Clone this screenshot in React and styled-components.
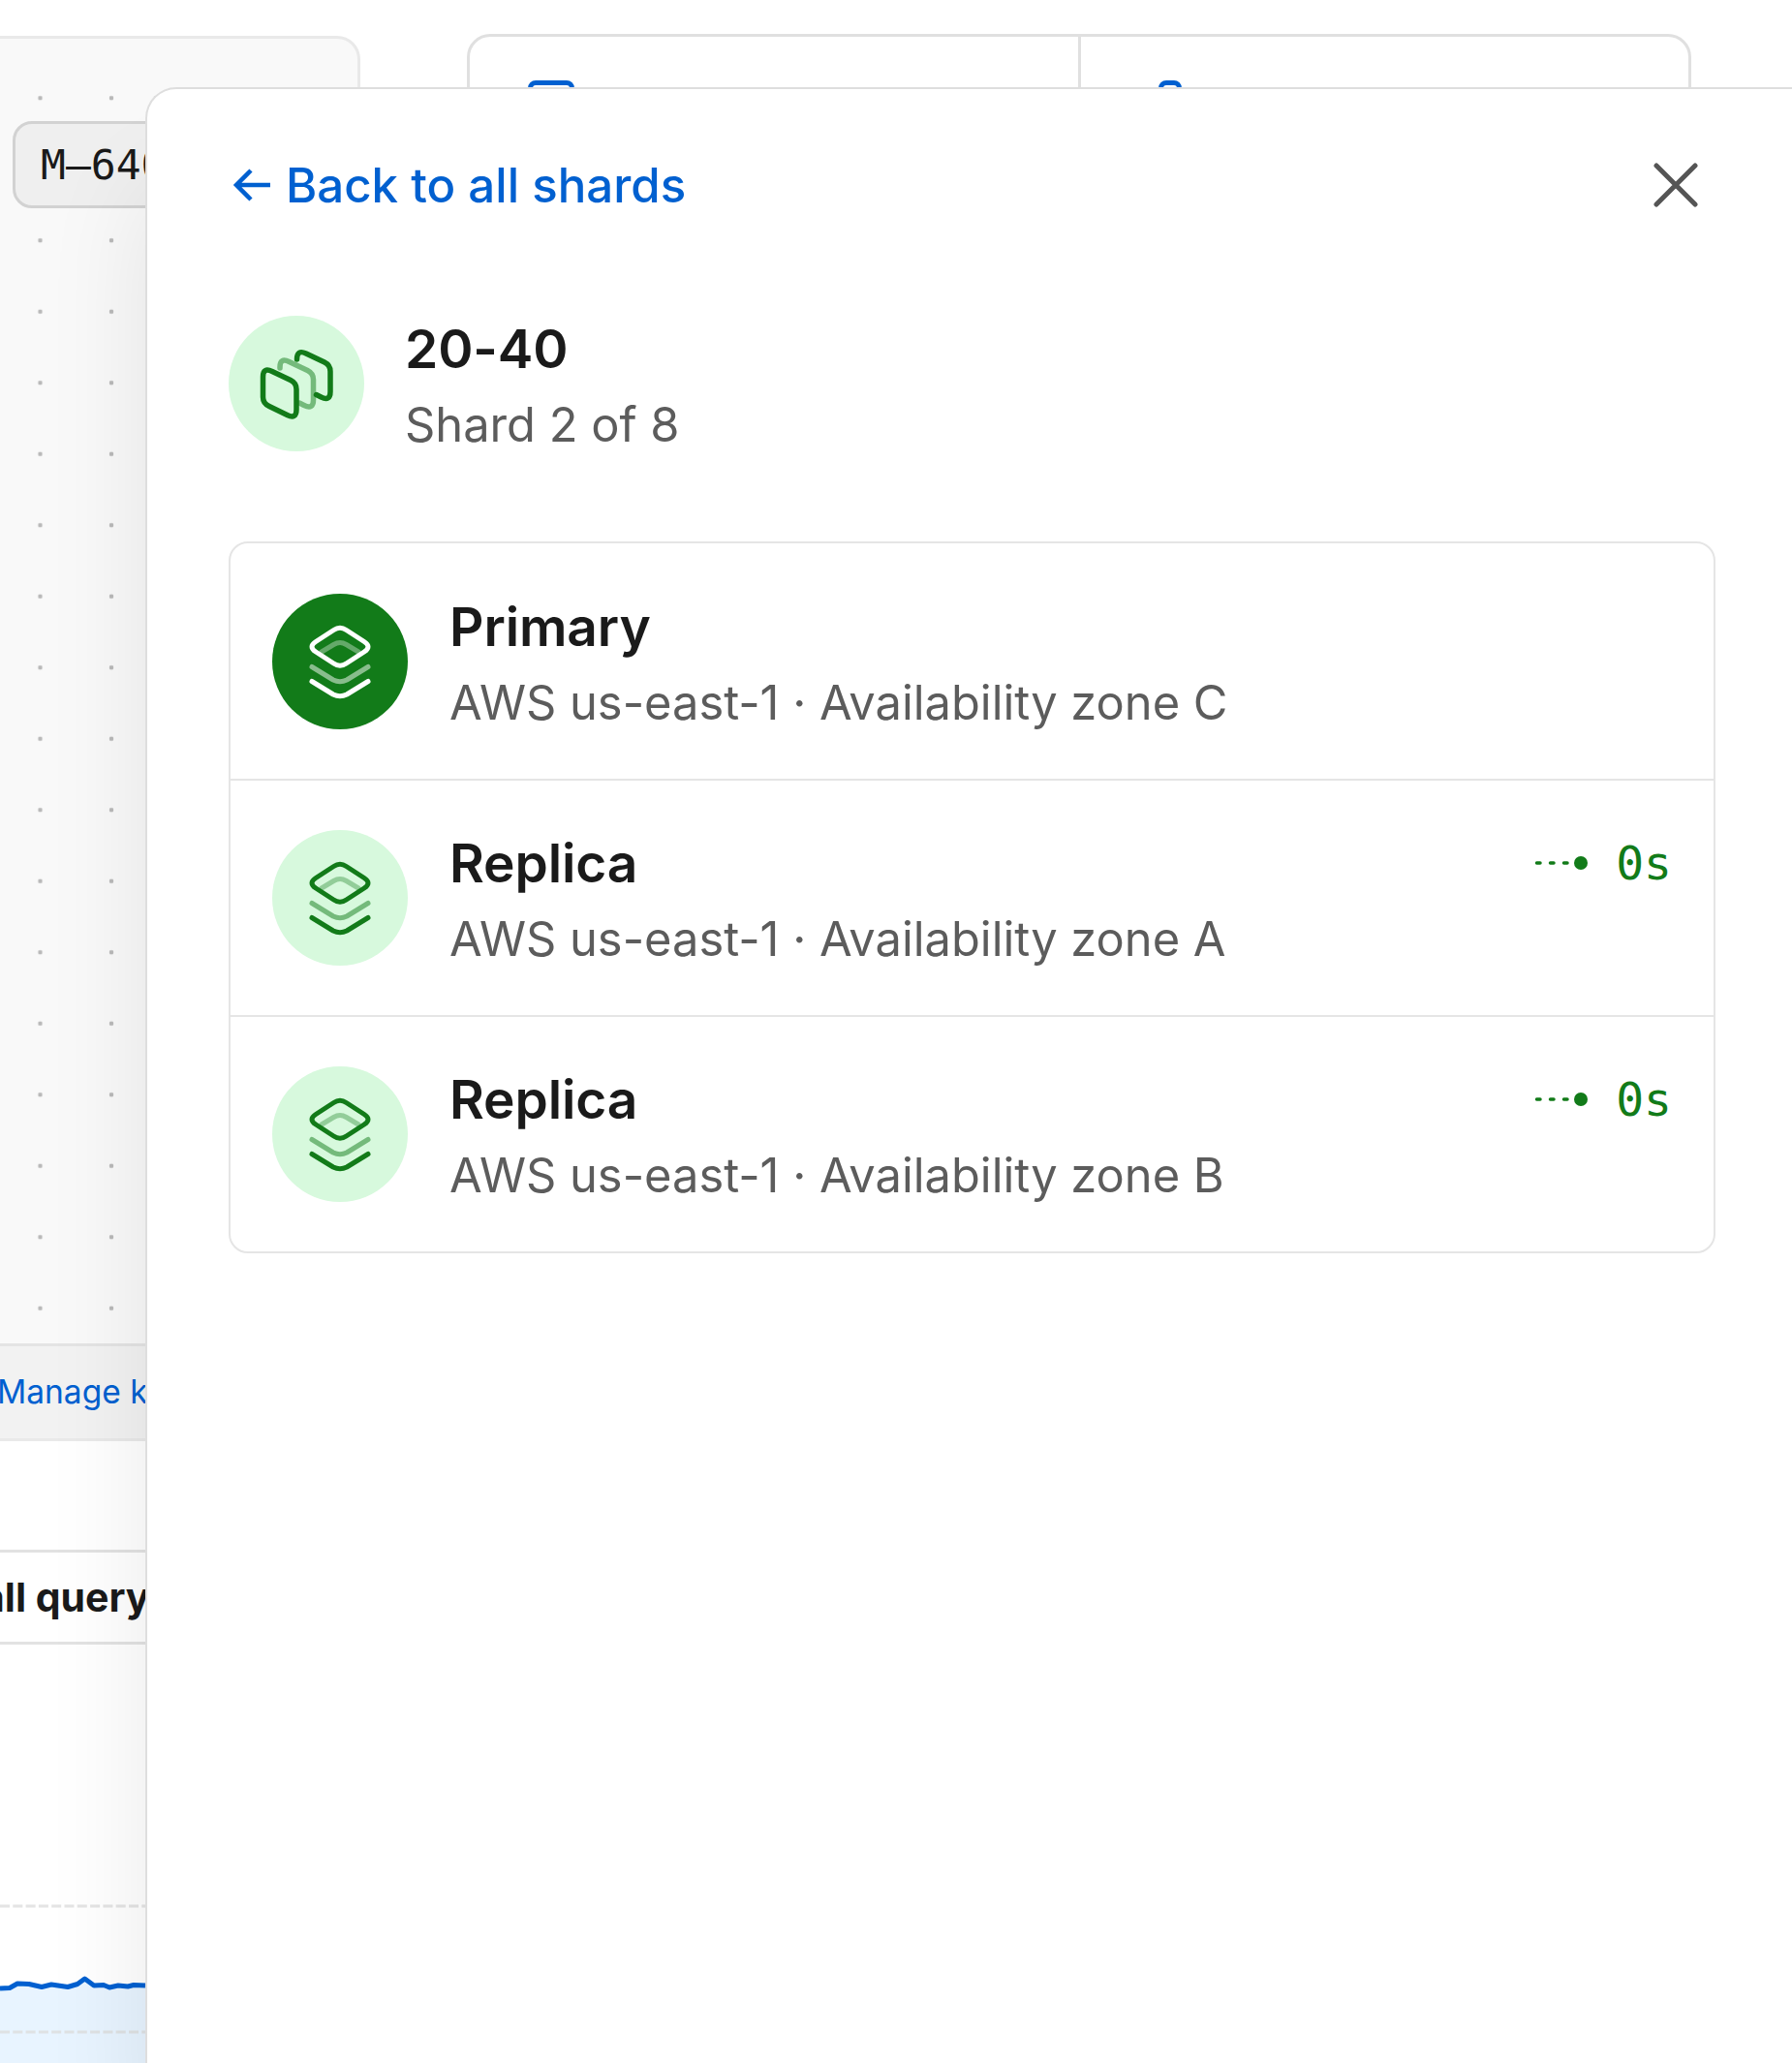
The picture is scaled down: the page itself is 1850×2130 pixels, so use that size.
import styled, { createGlobalStyle } from "styled-components";

const GREEN = "#127b19";
const BLUE = "#0060d0";

const GlobalStyle = createGlobalStyle`
  html, body {
    margin: 0;
    padding: 0;
    background: #fff;
    font-family: Inter, "Noto Sans", sans-serif;
    color: #1a1a1a;
  }
`;

const Page = styled.div`
  position: relative;
  width: 1850px;
  height: 2130px;
  overflow: hidden;
  display: flex;
  align-items: flex-start;
`;

const LeftColumn = styled.div`
  width: 372px;
  flex: none;
  padding-top: 37px;
`;

const MapCard = styled.div`
  background-color: #f9f9f9;
  background-image: radial-gradient(circle, #b9b9b9 2px, transparent 2.6px);
  background-size: 73.5px 73.5px;
  background-position: 4.75px 24.5px;
  border-top: 3px solid #e9e9e9;
  border-right: 3px solid #e9e9e9;
  border-top-right-radius: 24px;
  height: 1350px;
  padding: 85px 0 0 13px;
  box-sizing: border-box;
`;

const SizeButton = styled.div`
  display: inline-flex;
  align-items: center;
  height: 90px;
  box-sizing: border-box;
  padding: 0 30px 0 26px;
  background: #efefef;
  border: 3px solid #d2d2d2;
  border-radius: 20px;
  font-family: "DejaVu Sans Mono", monospace;
  font-size: 43px;
  color: #1a1a1a;
`;

const ManageStrip = styled.div`
  height: 101px;
  box-sizing: border-box;
  display: flex;
  align-items: center;
  background: #f2f2f2;
  border-top: 3px solid #e4e4e4;
  border-bottom: 3px solid #e9e9e9;
  color: ${BLUE};
  font-size: 33.5px;
  line-height: 40px;
  padding-bottom: 2px;
  white-space: nowrap;
  overflow: hidden;
`;

const ManageLink = styled.span`
  margin-left: -3px;
`;

const QueryTab = styled.div`
  margin-top: 112px;
  height: 98px;
  box-sizing: border-box;
  display: flex;
  align-items: center;
  border-top: 3px solid #e2e2e2;
  border-bottom: 3px solid #e2e2e2;
  font-size: 41px;
  font-weight: 700;
  white-space: nowrap;
  overflow: hidden;
`;

const QueryLabel = styled.span`
  margin-left: -115px;
`;

const ChartSvg = styled.svg`
  display: block;
`;

const ClusterCard = styled.div`
  margin: 35px 0 0 110px;
  width: 1264px;
  height: 260px;
  flex: none;
  box-sizing: border-box;
  display: flex;
  border: 3px solid #e0e0e0;
  border-radius: 24px;
`;

const ClusterCell = styled.div`
  box-sizing: border-box;
  width: ${(p) => p.$width}px;
  padding: 45px 0 0 ${(p) => p.$inset}px;
  & + & {
    border-left: 3px solid #e0e0e0;
  }
`;

const CellIcon = styled.div`
  width: ${(p) => p.$width}px;
  height: 60px;
  box-sizing: border-box;
  border: 5px solid ${BLUE};
  border-radius: 8px;
`;

const Panel = styled.aside`
  position: absolute;
  top: 90px;
  left: 150px;
  right: 0;
  bottom: 0;
  box-sizing: border-box;
  padding: 69px 79px 0 84px;
  background: #fff;
  border-top: 2px solid #dedede;
  border-left: 2px solid #dedede;
  border-top-left-radius: 32px;
  box-shadow: 0 100px 110px rgba(0, 0, 0, 0.09);
`;

const TopBar = styled.div`
  display: flex;
  justify-content: space-between;
  align-items: center;
  height: 60px;
  padding-right: 18px;
`;

const BackLink = styled.a`
  display: flex;
  align-items: center;
  gap: 15px;
  color: ${BLUE};
  font-size: 49.2px;
  font-weight: 500;
  line-height: 58px;
  padding-left: 4px;
`;

const ShardHead = styled.div`
  display: flex;
  align-items: flex-start;
  gap: 42px;
  margin-top: 105px;
`;

const Badge = styled.div`
  flex: none;
  width: 140px;
  height: 140px;
  border-radius: 50%;
  background: ${(p) => (p.$solid ? GREEN : "#d7f9dd")};
  color: ${(p) => (p.$solid ? "#fff" : GREEN)};
  svg {
    display: block;
  }
`;

const TextStack = styled.div`
  display: flex;
  flex-direction: column;
  gap: 15px;
  height: 140px;
`;

const Title = styled.div`
  font-size: 55px;
  line-height: 68px;
  font-weight: 600;
  letter-spacing: -0.1px;
  color: #1a1a1a;
`;

const Subtitle = styled.div`
  font-size: 48.8px;
  line-height: 60px;
  color: #5c5c5c;
`;

const NodeList = styled.div`
  margin-top: 93px;
  border: 2px solid #e5e5e5;
  border-radius: 20px;
`;

const NodeRow = styled.div`
  display: flex;
  align-items: center;
  gap: 43px;
  height: 243px;
  box-sizing: border-box;
  padding: 0 43px 0 43px;
  & + & {
    height: 244px;
    border-top: 2px solid #e5e5e5;
  }
`;

const NodeBody = styled.div`
  flex: 1;
  display: flex;
  justify-content: space-between;
  align-items: flex-start;
`;

const Lag = styled.div`
  display: flex;
  align-items: center;
  gap: 27px;
  height: 68px;
  color: ${GREEN};
  font-family: "DejaVu Sans Mono", monospace;
  font-size: 48px;
`;

const LagDots = () => (
  <svg width="58" height="16" viewBox="0 0 58 16">
    <path d="M3.500 8h3.500M17.500 8h3.500M31.500 8h3.500" stroke={GREEN} strokeWidth="3.500" strokeLinecap="round" fill="none" />
    <circle cx="49" cy="8" r="7" fill={GREEN} />
  </svg>
);

const BackArrow = () => (
  <svg width="40" height="34" viewBox="0 0 40 34" fill="none" stroke="currentColor" strokeWidth="4.500">
    <path d="M39 17H4M19 2 4 17l15 15" />
  </svg>
);

const CloseIcon = () => (
  <svg width="46" height="46" viewBox="0 0 46 46" fill="none" stroke="#555" strokeWidth="5" strokeLinecap="round">
    <path d="M3 3l40 40M43 3 3 43" />
  </svg>
);

const ShardsIcon = () => (
  <svg width="140" height="140" viewBox="0 0 140 140" fill="none" stroke="currentColor" strokeWidth="5.500" strokeLinejoin="round" strokeLinecap="round">
    <path opacity="0.5" d="M53 54v-1q0-10 9.500-5.500l19 9q6 3 6 9.500v21q0 10-9.500 5.500l-5-2.500" />
    <path d="M70.500 45q0-10.500 9.500-6l19 9q6 3 6 9.500v21q0 10-9.500 5.500l-5-2.500" />
    <path d="M35.500 63q0-10 9.500-5.500l19 9q6 3 6 9.500v21q0 10-9.500 5.500l-18.500-9q-6.500-3-6.500-9.500z" />
  </svg>
);

const LayersIcon = () => (
  <svg width="140" height="140" viewBox="0 0 140 140" fill="none" stroke="currentColor" strokeWidth="5" strokeLinejoin="round" strokeLinecap="round">
    <path opacity="0.35" d="M51 60 63.500 52.500Q70 48.500 76.500 52.500L89 60" />
    <path d="M63.500 37.500Q70 33 76.500 37.500L95 49.500Q103 54.700 95 60L76.500 72Q70 76.500 63.500 72L45 60Q37 54.700 45 49.500Z" />
    <path opacity="0.5" d="M41 75.500 63 89Q70 92.500 77 89L99 75.500" />
    <path d="M41 90.500 63 104Q70 107.500 77 104L99 90.500" />
  </svg>
);

const nodes = [
  { id: 1, title: "Primary", zone: "C", solid: true },
  { id: 2, title: "Replica", zone: "A", lag: "0s" },
  { id: 3, title: "Replica", zone: "B", lag: "0s" },
];

const linePoints = "0,356 10,355.500 18,351 30,351.500 43,354.500 53,352 70,354.500 80,351.500 87.500,346 97,353 107,352.500 113,355 122,353 132,354 138,352.500 150,353";

export default function App() {
  return (
    <Page>
      <GlobalStyle />
      <LeftColumn>
        <MapCard>
          <SizeButton>M–640</SizeButton>
        </MapCard>
        <ManageStrip>
          <ManageLink>Manage keys</ManageLink>
        </ManageStrip>
        <QueryTab>
          <QueryLabel>Overall query</QueryLabel>
        </QueryTab>
        <ChartSvg width="372" height="433" viewBox="0 1 372 433">
          <polygon points={`${linePoints} 150,434 0,434`} fill="#e8f4ff" />
          <path d="M0 271H150M0 401H150" stroke="#dedede" strokeWidth="3" strokeDasharray="10 3.300" opacity="0.8" />
          <polyline points={linePoints} fill="none" stroke={BLUE} strokeWidth="5" strokeLinejoin="round" />
        </ChartSvg>
      </LeftColumn>

      <ClusterCard>
        <ClusterCell $width={628} $inset={60}>
          <CellIcon $width={48} />
        </ClusterCell>
        <ClusterCell $width={630} $inset={80}>
          <CellIcon $width={24} />
        </ClusterCell>
      </ClusterCard>

      <Panel>
        <TopBar>
          <BackLink>
            <BackArrow />
            Back to all shards
          </BackLink>
          <CloseIcon />
        </TopBar>

        <ShardHead>
          <Badge>
            <ShardsIcon />
          </Badge>
          <TextStack>
            <Title>20-40</Title>
            <Subtitle>Shard 2 of 8</Subtitle>
          </TextStack>
        </ShardHead>

        <NodeList>
          {nodes.map((node) => (
            <NodeRow key={node.id}>
              <Badge $solid={node.solid}>
                <LayersIcon />
              </Badge>
              <NodeBody>
                <TextStack>
                  <Title>{node.title}</Title>
                  <Subtitle>AWS us-east-1 · Availability zone {node.zone}</Subtitle>
                </TextStack>
                {node.lag && (
                  <Lag>
                    <LagDots />
                    {node.lag}
                  </Lag>
                )}
              </NodeBody>
            </NodeRow>
          ))}
        </NodeList>
      </Panel>
    </Page>
  );
}
